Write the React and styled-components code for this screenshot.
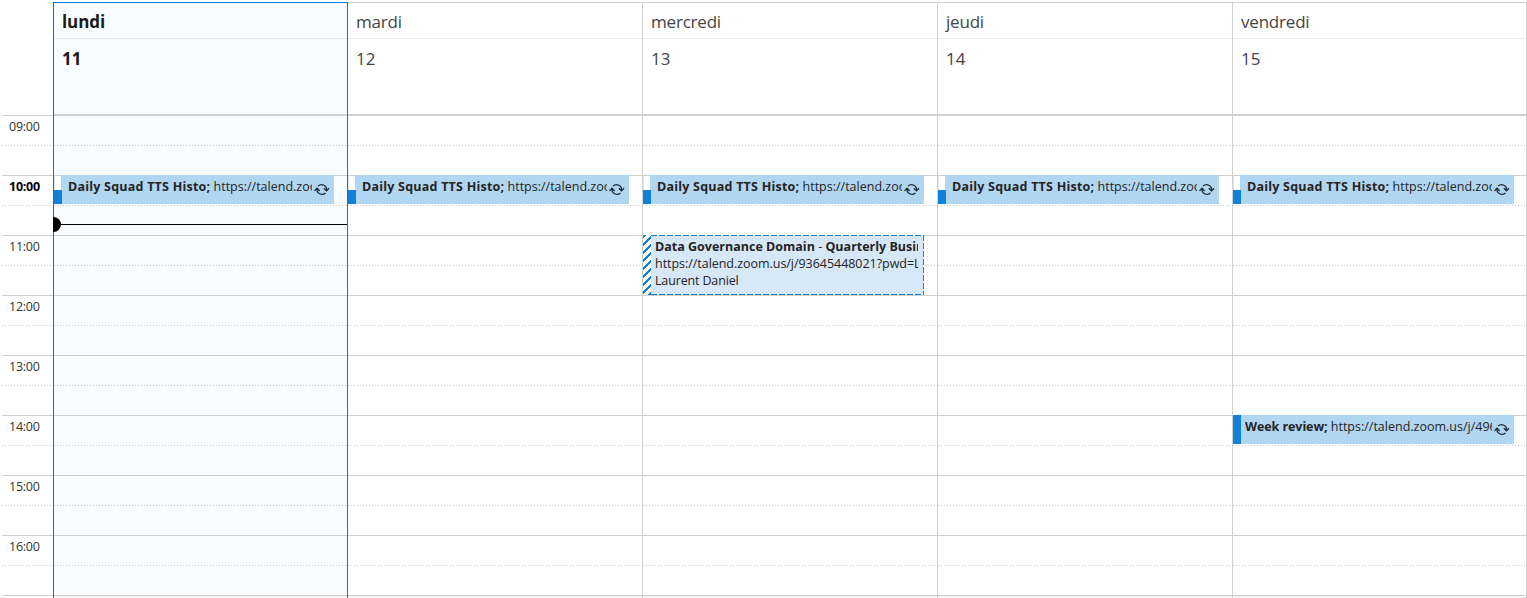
import React from "react";
import styled, { createGlobalStyle, css } from "styled-components";

const Global = createGlobalStyle`
  * { box-sizing: border-box; }
  body { margin: 0; background: #fff; overflow: hidden; }
`;

const dottedBottom = css`
  background: repeating-linear-gradient(90deg, #c8c8c8 0 1px, transparent 1px 3px) 0 100% / 100% 1px no-repeat;
`;

const Calendar = styled.div`
  display: flex;
  width: 1527px;
  height: 598px;
  padding: 2px 0 0 2px;
  overflow: hidden;
  font-family: "Open Sans", "Noto Sans", sans-serif;
  font-size: 12.5px;
  color: #252423;
`;

const Gutter = styled.div`
  width: 51px;
  padding-top: 113px;
  flex: none;
`;

const Day = styled.section`
  position: relative;
  flex: none;
  width: ${(p) => p.$width}px;
  border-left: 1px solid ${(p) => (p.$edge ? "#0078d4" : "#d0d0d0")};
  background: ${(p) => (p.$today ? "#f8fcff" : "#fff")};
  ${(p) => p.$last && css`border-right: 1px solid #d0d0d0;`}
`;

const DayName = styled.header`
  height: 37px;
  padding-left: 8px;
  border-top: 1px solid ${(p) => (p.$today ? "#0078d4" : "#d0d0d0")};
  border-bottom: 1px solid #ebebeb;
  font-size: 17px;
  line-height: 38px;
  letter-spacing: ${(p) => (p.$today ? "-0.1px" : "-0.2px")};
  font-weight: ${(p) => (p.$today ? 700 : 400)};
  color: ${(p) => (p.$today ? "#1b1a19" : "#444")};
`;

const DayNumber = styled.div`
  height: 77px;
  padding: 7px 0 0 8px;
  border-bottom: 2px solid #d0d0d0;
  font-size: 17px;
  line-height: 26px;
  font-weight: ${(p) => (p.$today ? 700 : 400)};
  color: ${(p) => (p.$today ? "#1b1a19" : "#444")};
`;

const Hours = styled.div`
  position: relative;
  height: 482px;
`;

const HalfHour = styled.div`
  height: 30px;
  ${(p) => (p.$full ? css`border-bottom: 1px solid #d0d0d0;` : dottedBottom)}
`;

const Footer = styled.div`
  height: 2px;
  background: #f3f3f3;
`;

const HourSlot = styled.div`
  height: 60px;
  border-top: 1px solid #d0d0d0;
`;

const HourLabel = styled.div`
  height: 30px;
  padding: 1px 0 0 7px;
  ${dottedBottom}
  line-height: 20px;
  letter-spacing: -0.25px;
  font-weight: ${(p) => (p.$now ? 700 : 400)};
  color: ${(p) => (p.$now ? "#000" : "#333")};
`;

const Event = styled.article`
  position: absolute;
  z-index: 1;
  top: ${(p) => p.$top}px;
  left: 0;
  right: ${(p) => p.$right}px;
  height: ${(p) => p.$height}px;
  display: flex;
  background: #b1d6f2;
  ${(p) => p.$tentative && css`
    padding: 1px 1px 1px 0;
    background:
      repeating-linear-gradient(90deg, #1180d8 0 6px, #d6e8f8 6px 8px) 0 0 / 100% 1px no-repeat,
      repeating-linear-gradient(90deg, #1180d8 0 6px, #d6e8f8 6px 8px) 0 100% / 100% 1px no-repeat,
      repeating-linear-gradient(180deg, #1180d8 0 6px, #d6e8f8 6px 8px) 100% 0 / 1px 100% no-repeat,
      #d6e8f8;
  `}
`;

const StatusBar = styled.div`
  flex: none;
  width: ${(p) => (p.$kind === "partial" ? 7 : 8)}px;
  margin-right: ${(p) => (p.$kind === "partial" ? 7 : 4)}px;
  ${(p) => p.$kind === "busy" && css`background: #1180d8;`}
  ${(p) => p.$kind === "partial" && css`
    border-top: 1px solid #d0d0d0;
    background: #fff;
    box-shadow: inset 1px 0 #e4e4e4;
  `}
  ${(p) => p.$kind === "tentative" && css`
    margin-top: -1px;
    margin-bottom: -1px;
    background: repeating-linear-gradient(135deg, #1180d8 0 2.8px, #fff 2.8px 5.66px);
  `}
`;

const PartialFill = styled.div`
  height: 14px;
  width: 8px;
  margin-top: 14px;
  background: #1180d8;
`;

const EventBody = styled.div`
  flex: 1;
  min-width: 0;
  margin-right: ${(p) => (p.$recurring ? 22 : 5)}px;
  overflow: hidden;
  padding-top: ${(p) => (p.$recurring ? 3 : 2)}px;
`;

const Line = styled.div`
  width: max-content;
  white-space: pre;
  line-height: 17px;
  letter-spacing: ${(p) => p.$track ?? 0}px;
`;

const Title = styled.b`
  font-weight: 700;
  letter-spacing: ${(p) => p.$track ?? 0}px;
`;

const RecurIcon = styled.svg`
  position: absolute;
  right: 4px;
  top: 7px;
  width: 16px;
  height: 15px;
  fill: none;
  stroke: #1f2a33;
  stroke-width: 1.35;
`;

const NowLine = styled.div`
  position: absolute;
  z-index: 2;
  left: 0;
  right: 0;
  top: 108px;
  height: 1px;
  background: #000;
`;

const NowDot = styled.div`
  position: absolute;
  left: -1px;
  top: -7px;
  width: 8px;
  height: 15px;
  border-radius: 0 8px 8px 0;
  background: #000;
`;

function Recurring() {
  return (
    <RecurIcon viewBox="0 0 16 15">
      <path d="M4.1 4.1A5 5 0 0 1 12.5 8.4M11.4 10.9A5 5 0 0 1 3 6.6" />
      <path d="M9.8 6.2L12.5 8.9L15 6.2M0.5 8.9L3 6.2L5.7 8.9" />
    </RecurIcon>
  );
}

function Meeting({ top, right, title, link, partial }) {
  return (
    <Event $top={top} $height={29} $right={right}>
      <StatusBar $kind={partial ? "partial" : "busy"}>{partial && <PartialFill />}</StatusBar>
      <EventBody $recurring>
        <Line><Title $track={partial ? 0.22 : -0.08}>{title}</Title> {link}</Line>
      </EventBody>
      <Recurring />
    </Event>
  );
}

const hours = ["09:00", "10:00", "11:00", "12:00", "13:00", "14:00", "15:00", "16:00"];
const days = [
  { name: "lundi", number: 11, width: 294, right: 13, today: true },
  { name: "mardi", number: 12, width: 295, right: 13 },
  { name: "mercredi", number: 13, width: 295, right: 13 },
  { name: "jeudi", number: 14, width: 295, right: 13 },
  { name: "vendredi", number: 15, width: 295, right: 12 },
];

export default function App() {
  return (
    <>
      <Global />
      <Calendar>
        <Gutter>
          {hours.map((h) => (
            <HourSlot key={h}><HourLabel $now={h === "10:00"}>{h}</HourLabel></HourSlot>
          ))}
          <HourSlot />
        </Gutter>
        {days.map((d, i) => (
          <Day key={d.name} $width={d.width} $today={d.today} $edge={i < 2} $last={i === 4}>
            <DayName $today={d.today}>{d.name}</DayName>
            <DayNumber $today={d.today}>{d.number}</DayNumber>
            <Hours>
              {hours.map((h) => (
                <React.Fragment key={h}><HalfHour /><HalfHour $full /></React.Fragment>
              ))}
              <Footer />
              <Meeting top={59} right={d.right} partial title="Daily Squad TTS Histo;" link="https://talend.zoo" />
              {i === 0 && <NowLine><NowDot /></NowLine>}
              {i === 2 && (
                <Event $top={119} $height={60} $right={13} $tentative>
                  <StatusBar $kind="tentative" />
                  <EventBody>
                    <Line><Title>Data Governance Domain</Title> - <Title>Quarterly Busin</Title></Line>
                    <Line $track={-0.04}>https://talend.zoom.us/j/93645448021?pwd=L</Line>
                    <Line $track={-0.15}>Laurent Daniel</Line>
                  </EventBody>
                </Event>
              )}
              {i === 4 && (
                <Meeting top={299} right={12} title="Week review;" link="https://talend.zoom.us/j/496" />
              )}
            </Hours>
          </Day>
        ))}
      </Calendar>
    </>
  );
}
